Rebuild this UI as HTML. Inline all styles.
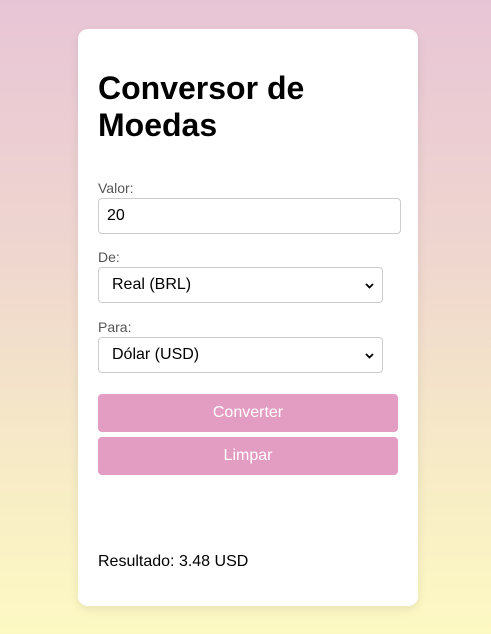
<!DOCTYPE html>
<html><head><style>
html,body{margin:0;padding:0;width:491px;height:634px;overflow:hidden}
body{background:linear-gradient(#e8c5d6,#efd6cf 40%,#f7ecc6 75%,#fdf9c3);font-family:"Liberation Sans",Arial,sans-serif;position:relative}
.card{position:absolute;left:78px;top:29px;width:340px;height:577px;background:#fff;border-radius:10px;box-shadow:0 4px 10px rgba(0,0,0,.08)}
.a{position:absolute}
h1{position:absolute;left:20px;top:41px;margin:0;font-size:32px;line-height:37px;font-weight:bold;color:#000}
.lbl{font-size:14px;color:#555;left:20px}
.box{left:20px;border:1px solid #ccc;border-radius:4px;box-sizing:border-box;font-size:16px;color:#000}
.btn{left:20px;width:300px;height:38px;background:#e39cc2;border-radius:4px;color:#fff;font-size:16px;text-align:center;line-height:38px}
</style></head><body>
<div class="card">
<h1>Conversor de<br>Moedas</h1>
<div class="a lbl" style="top:151px">Valor:</div>
<div class="a box" style="top:169px;width:303px;height:36px;padding-left:8px;line-height:34px">20</div>
<div class="a lbl" style="top:220px">De:</div>
<div class="a box" style="top:238px;width:285px;height:36px;padding-left:13px;line-height:34px">Real (BRL)
<svg class="a" style="right:8px;top:15px" width="9" height="6" viewBox="0 0 9 6"><path d="M1 1 4.5 4.5 8 1" stroke="#000" stroke-width="1.8" fill="none"/></svg></div>
<div class="a lbl" style="top:290px">Para:</div>
<div class="a box" style="top:308px;width:285px;height:36px;padding-left:13px;line-height:34px">Dólar (USD)
<svg class="a" style="right:8px;top:15px" width="9" height="6" viewBox="0 0 9 6"><path d="M1 1 4.5 4.5 8 1" stroke="#000" stroke-width="1.8" fill="none"/></svg></div>
<div class="a btn" style="top:365px">Converter</div>
<div class="a btn" style="top:408px">Limpar</div>
<div class="a" style="left:20px;top:524px;font-size:16px;color:#000">Resultado: 3.48 USD</div>
</div>
</body></html>
